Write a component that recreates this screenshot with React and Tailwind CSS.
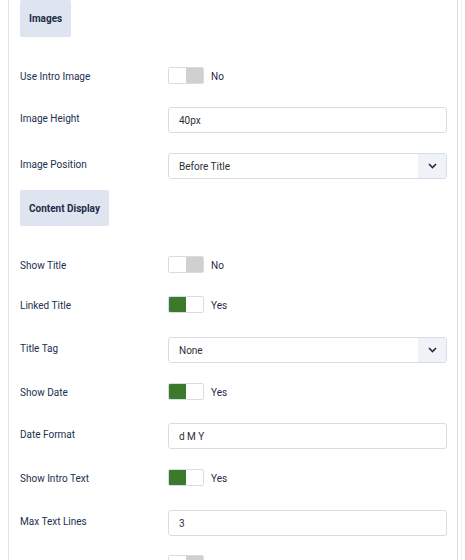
import React from 'react';

const Header = ({ children, h = 'h-[37px]' }) => (
  <div className={`shrink-0 inline-flex items-center self-start ${h} px-[9px] bg-[#dee5f1] rounded-[2px] text-[10px] font-bold text-[#1f2b47]`}>
    {children}
  </div>
);

const Toggle = ({ on }) => (
  <div className="flex items-center gap-[7px] h-[20px]">
    <div className="flex w-[36px] h-[17px] border border-[#d6dce8] rounded-[2px] overflow-hidden">
      <div className={on ? 'w-1/2 bg-[#3b7a2c]' : 'w-1/2 bg-white'} />
      <div className={on ? 'w-1/2 bg-white' : 'w-1/2 bg-[#d0d0d0]'} />
    </div>
    <span className="text-[10px] text-[#1f2b47] relative top-[0.5px]">{on ? 'Yes' : 'No'}</span>
  </div>
);

const Input = ({ value }) => (
  <div className="flex items-center h-[26px] px-[10px] bg-white border border-[#d6dce8] rounded-[3px] text-[10px] text-[#2b2f36]">
    {value}
  </div>
);

const Select = ({ value }) => (
  <div className="flex items-stretch h-[26px] bg-white border border-[#d6dce8] rounded-[3px] text-[10px] text-[#2b2f36] overflow-hidden">
    <div className="flex-1 flex items-center px-[10px]">{value}</div>
    <div className="w-[28px] flex items-center justify-center bg-[#eff2f7]">
      <svg width="9" height="6" viewBox="0 0 9 6" fill="none">
        <path d="M1 1l3.5 3.5L8 1" stroke="#1f2b47" strokeWidth="1.6" />
      </svg>
    </div>
  </div>
);

const Row = ({ label, children, mb }) => (
  <div className={`shrink-0 flex items-start ${mb}`}>
    <div className="w-[148px] shrink-0 h-[20px] relative top-[1.5px] leading-[20px] text-[10px] text-[#22304f]">{label}</div>
    <div className="flex-1">{children}</div>
  </div>
);

export default function App() {
  return (
    <div className="w-[465px] h-[560px] overflow-hidden bg-white" style={{ fontFamily: 'Roboto, "Noto Sans", sans-serif' }}>
      <div className="flex h-full">
        <div className="ml-[8px] w-[450px] h-full border-l border-r border-[#dde2ed] pl-[11px] pr-[10px] flex flex-col">
          <Header>Images</Header>
          <div className="shrink-0 h-[28.5px]" />
          <Row label="Use Intro Image" mb="mb-[21.5px]"><Toggle on={false} /></Row>
          <Row label="Image Height" mb="mb-[20px]"><Input value="40px" /></Row>
          <Row label="Image Position" mb="mb-[11px]"><Select value="Before Title" /></Row>
          <Header h="h-[36px]">Content Display</Header>
          <div className="shrink-0 h-[28.5px]" />
          <Row label="Show Title" mb="mb-[20px]"><Toggle on={false} /></Row>
          <Row label="Linked Title" mb="mb-[22.5px]"><Toggle on /></Row>
          <Row label="Title Tag" mb="mb-[18.5px]"><Select value="None" /></Row>
          <Row label="Show Date" mb="mb-[21.5px]"><Toggle on /></Row>
          <Row label="Date Format" mb="mb-[18.5px]"><Input value="d M Y" /></Row>
          <Row label="Show Intro Text" mb="mb-[22.5px]"><Toggle on /></Row>
          <Row label="Max Text Lines" mb="mb-[17.5px]"><Input value="3" /></Row>
          <Row label="" mb="mb-[20px]"><Toggle on={false} /></Row>
        </div>
        <div className="ml-[3px] w-px h-full bg-[#eef0f5]" />
      </div>
    </div>
  );
}
